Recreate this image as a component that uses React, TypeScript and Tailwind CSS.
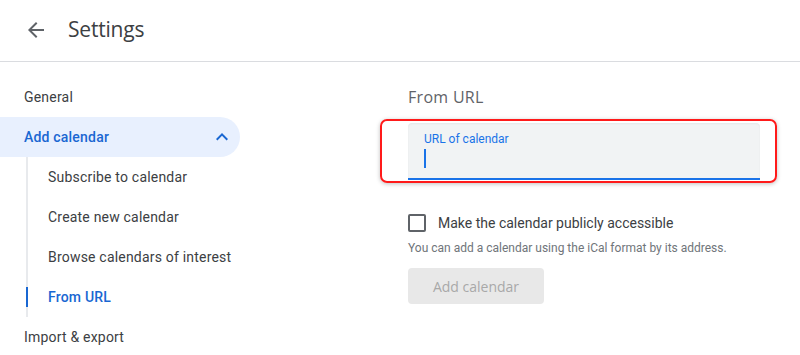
import React from "react";

export default function App() {
  const sub = ["Subscribe to calendar", "Create new calendar", "Browse calendars of interest"];
  return (
    <div className="w-[800px] h-[355px] overflow-hidden bg-white text-[#3c4043]" style={{ fontFamily: "Roboto, 'Liberation Sans', sans-serif" }}>
      <header className="h-[62px] border-b border-[#dadce0] flex items-center">
        <div className="w-[24px] h-[24px] ml-[24px] -mt-[2px]">
          <svg viewBox="0 0 24 24" width="24" height="24"><path d="M20 11H7.83l5.59-5.59L12 4l-8 8 8 8 1.41-1.41L7.83 13H20v-2z" fill="#5f6368" /></svg>
        </div>
        <h1 className="ml-[20px] -mt-[2px] text-[21px] tracking-[-0.2px] text-[#3c4043]" style={{ fontFamily: "'Open Sans', sans-serif" }}>Settings</h1>
      </header>
      <div className="flex">
        <nav className="w-[256px] shrink-0 pt-[15px] text-[14px] tracking-[0.2px]">
          <div className="h-10 flex items-center pl-6">General</div>
          <div className="h-10 w-[240px] flex items-center justify-between pl-6 pr-[6px] rounded-r-full bg-[#e8f0fe] text-[#1967d2] font-medium">
            <span>Add calendar</span>
            <svg viewBox="0 0 24 24" width="24" height="24"><path d="M12 8l-6 6 1.41 1.41L12 10.83l4.59 4.58L18 14z" fill="#1967d2" /></svg>
          </div>
          <div className="ml-[26px] my-[10px] border-l-2 border-[#e8eaed]">
            <div className="-my-[10px]">
              {sub.map((s) => (
                <div key={s} className="h-10 flex items-center pl-[20px]">{s}</div>
              ))}
              <div className="relative h-10 flex items-center pl-[20px] text-[#1967d2] font-medium">
                <span className="absolute -left-[2px] top-[10px] h-[20px] w-[2px] bg-[#1967d2]" />
                From URL
              </div>
            </div>
          </div>
          <div className="h-10 flex items-center pl-6">Import &amp; export</div>
        </nav>
        <main className="pl-[152px] pt-[15px]">
          <div className="h-10 flex items-center text-[16px] tracking-[0.3px] text-[#5f6368]" style={{ fontFamily: "'Open Sans', sans-serif" }}>From URL</div>
          <div className="mt-[2px] -ml-[28px] w-[397px] h-[64px] border-2 border-[#ff1a1a] rounded-[7px] pl-[26px] pt-[2px] shadow-[0_1px_4px_rgba(0,0,0,0.25)]">
            <div className="w-[352px] h-[57px] bg-[#f1f3f4] rounded-t-[4px] border-b-2 border-[#1a73e8] pl-4 pt-[8px] shadow-[inset_0_1px_2px_rgba(0,0,0,0.05)]">
              <div className="text-[12px] leading-[16px] text-[#1a73e8]">URL of calendar</div>
              <div className="mt-[2px] w-[1.5px] h-[19px] bg-[#1a73e8]" />
            </div>
          </div>
          <div className="mt-[31px] flex items-center h-[18px]">
            <div className="w-[18px] h-[18px] border-2 border-[#5f6368] rounded-[2px]" />
            <span className="ml-[12px] text-[14px] text-[#3c4043]">Make the calendar publicly accessible</span>
          </div>
          <div className="mt-[8px] text-[12px] leading-[16px] text-[#70757a]">You can add a calendar using the iCal format by its address.</div>
          <button className="mt-[12px] w-[136px] h-[36px] rounded-[4px] bg-[#e8e8e8] text-[14px] font-medium text-[#a8a8a8]" style={{ fontFamily: "'Open Sans', sans-serif" }}>Add calendar</button>
        </main>
      </div>
    </div>
  );
}
